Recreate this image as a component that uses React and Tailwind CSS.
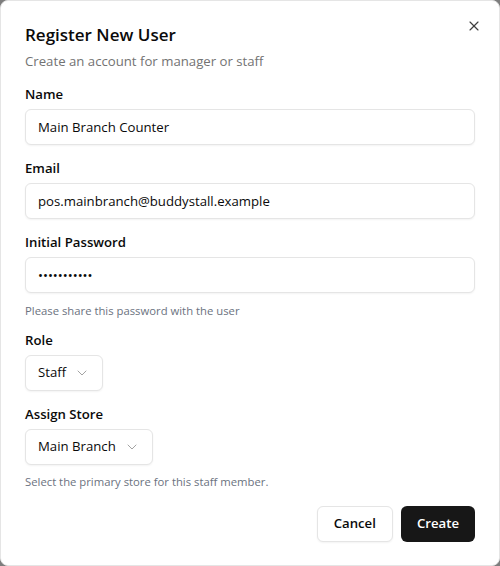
import React from "react";
import { X, ChevronDown } from "lucide-react";

const font = { fontFamily: '"Open Sans", "Noto Sans", sans-serif' };

function Field({ label, children, hint, hintClass = "" }) {
  return (
    <div className="flex flex-col gap-2">
      <label className="text-[13.2px] font-semibold leading-[14px] text-[#0a0a0a]">{label}</label>
      {children}
      {hint && <p className={`text-[11.3px] leading-4 text-[#6b7280] ${hintClass}`}>{hint}</p>}
    </div>
  );
}

function TextInput({ value, type = "text" }) {
  return (
    <input
      readOnly
      type={type}
      value={value}
      className="h-9 w-full rounded-md border border-[#e5e5e5] bg-white px-3 text-[13.2px] text-[#0a0a0a] shadow-[0_1px_2px_rgba(0,0,0,0.05)] outline-none"
    />
  );
}

function SelectBox({ value }) {
  return (
    <button className="flex h-9 w-fit items-center gap-2 rounded-md border border-[#e5e5e5] bg-white px-3 text-[13.2px] text-[#0a0a0a] shadow-[0_1px_2px_rgba(0,0,0,0.05)]">
      <span>{value}</span>
      <ChevronDown className="h-4 w-4 text-[#a3a3a3]" strokeWidth={1.5} />
    </button>
  );
}

export default function App() {
  return (
    <div className="h-[566px] w-[500px] bg-[#7d7d7d]" style={font}>
      <div className="relative flex h-full w-full flex-col gap-4 rounded-lg border border-[#e5e5e5] bg-white p-6">
        <button className="absolute right-[17px] top-[17px] text-[#404040]">
          <X className="h-4 w-4" strokeWidth={1.75} />
        </button>
        <div className="mt-px flex flex-col gap-[7px]">
          <h2 className="text-[17px] font-semibold leading-[18px] text-[#0a0a0a]">Register New User</h2>
          <p className="text-[13.2px] leading-5 text-[#737373]">Create an account for manager or staff</p>
        </div>
        <Field label="Name">
          <TextInput value="Main Branch Counter" />
        </Field>
        <Field label="Email">
          <TextInput value="pos.mainbranch@buddystall.example" />
        </Field>
        <Field
          label="Initial Password"
          hint="Please share this password with the user"
          hintClass="mt-0.5 -mb-0.5"
        >
          <TextInput type="password" value="abcdefghijk" />
        </Field>
        <Field label="Role">
          <SelectBox value="Staff" />
        </Field>
        <Field
          label="Assign Store"
          hint="Select the primary store for this staff member."
          hintClass="mt-px"
        >
          <SelectBox value="Main Branch" />
        </Field>
        <div className="flex justify-end gap-2">
          <button className="h-9 rounded-md border border-[#e5e5e5] bg-white px-4 text-[13.2px] font-semibold text-[#0a0a0a] shadow-[0_1px_2px_rgba(0,0,0,0.05)]">
            Cancel
          </button>
          <button className="h-9 rounded-md bg-[#171717] px-4 text-[13.2px] font-semibold text-white">
            Create
          </button>
        </div>
      </div>
    </div>
  );
}
